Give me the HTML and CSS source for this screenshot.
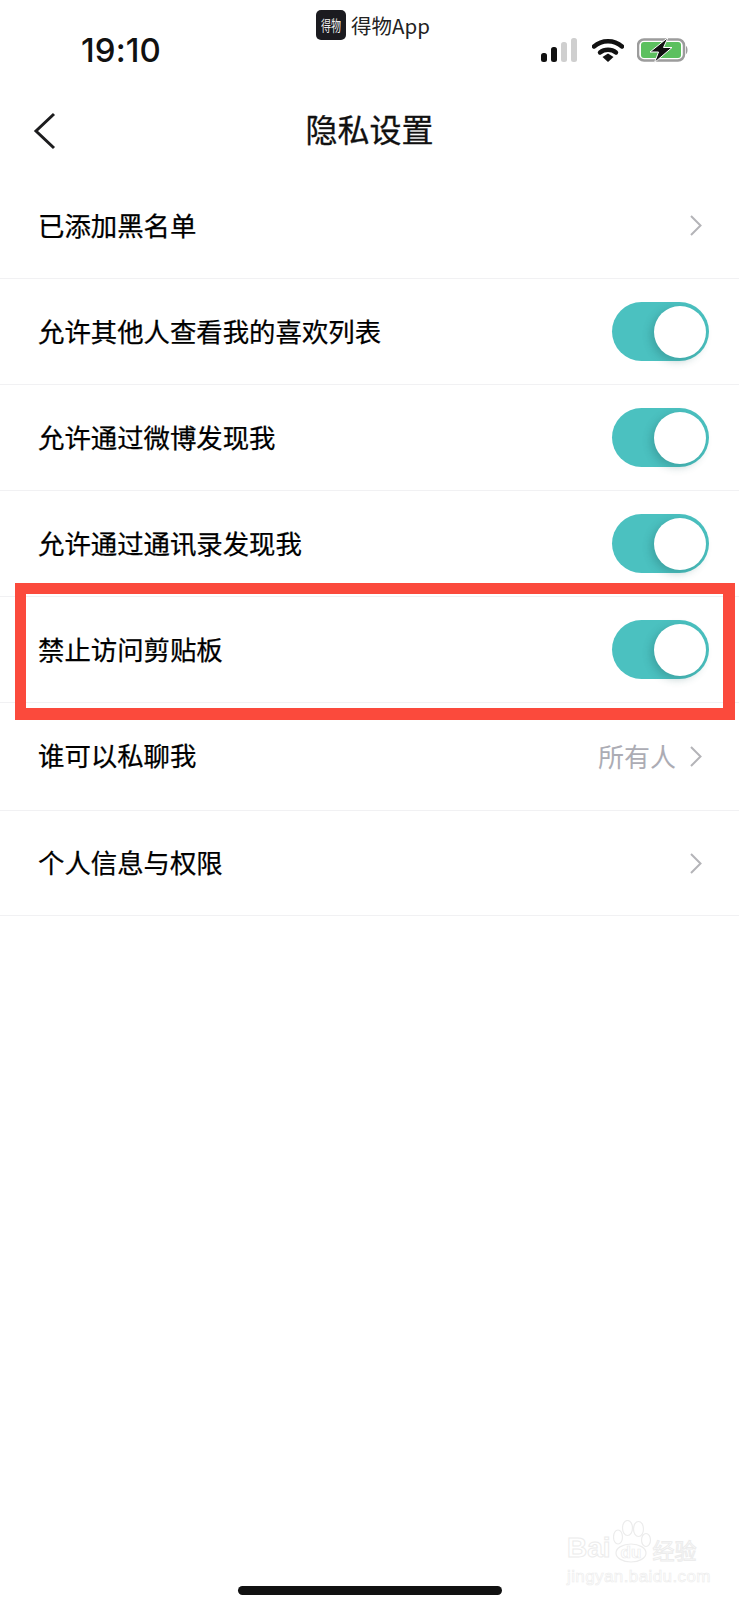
FILE: index.html
```html
<!DOCTYPE html>
<html lang="zh-CN">
<head>
  <meta charset="UTF-8" />
  <title>隐私设置</title>
  <link rel="stylesheet" href="styles.css">
</head>
<body>
  <div class="page">
    <div class="app-tag">
      <span class="app-logo"><span class="app-logo-text">得物</span></span>
      <span class="app-name">得物App</span>
    </div>

    <header class="status">
      <span class="time">19:10</span>
      <div class="status-icons">
        <svg class="signal" width="36" height="24" viewBox="0 0 36 24">
          <rect x="0" y="15" width="6" height="9" rx="2.5" fill="#111" />
          <rect x="10" y="9" width="6" height="15" rx="2.5" fill="#111" />
          <rect x="20" y="4" width="6" height="20" rx="2.5" fill="#cfcfcf" />
          <rect x="30" y="0" width="6" height="24" rx="2.5" fill="#cfcfcf" />
        </svg>
        <svg class="wifi" width="32" height="24" viewBox="0 0 32 24">
          <path d="M2 8.5 C10 1.5 22 1.5 30 8.5" fill="none" stroke="#111" stroke-width="4.4" stroke-linecap="round" />
          <path d="M8 14.5 C12.500 10.800 19.500 10.800 24 14.500" fill="none" stroke="#111" stroke-width="4.400" stroke-linecap="round" />
          <path d="M10.500 19 L16 15.500 L21.500 19 L16 24 Z" fill="#111" />
        </svg>
        <svg class="battery" width="52" height="26" viewBox="0 0 52 26">
          <rect x="1" y="2.500" width="46" height="21" rx="6" fill="#fff" stroke="#9c9c9c" stroke-width="2.500" />
          <rect x="4" y="5" width="40" height="16" rx="3" fill="#5cc05f" />
          <path d="M49 9 C51 10 51 16 49 17 Z" fill="#9c9c9c" />
          <path d="M31 0.500 L13 15 L21.500 15 L17.500 25.500 L35 10.500 L26.500 10.500 Z" fill="#111" stroke="#fff" stroke-width="1" stroke-linejoin="round" />
        </svg>
      </div>
    </header>

    <nav class="nav">
      <svg class="back" width="24" height="38" viewBox="0 0 24 38">
        <path d="M21 2 L3 19 L21 36" fill="none" stroke="#1c1c1e" stroke-width="3" />
      </svg>
      <h1 class="title">隐私设置</h1>
    </nav>

    <ul class="list">
      <li class="row">
        <span class="label">已添加黑名单</span>
        <svg class="arrow" width="12" height="21" viewBox="0 0 12 21"><path d="M1 1 L10.500 10.500 L1 20" /></svg>
      </li>
      <li class="row">
        <span class="label">允许其他人查看我的喜欢列表</span>
        <span class="switch"><span class="knob"></span></span>
      </li>
      <li class="row">
        <span class="label">允许通过微博发现我</span>
        <span class="switch"><span class="knob"></span></span>
      </li>
      <li class="row">
        <span class="label">允许通过通讯录发现我</span>
        <span class="switch"><span class="knob"></span></span>
      </li>
      <li class="row">
        <span class="label">禁止访问剪贴板</span>
        <span class="switch"><span class="knob"></span></span>
      </li>
      <li class="row row-tall">
        <span class="label">谁可以私聊我</span>
        <span class="value">所有人</span>
        <svg class="arrow" width="12" height="21" viewBox="0 0 12 21"><path d="M1 1 L10.500 10.500 L1 20" /></svg>
      </li>
      <li class="row row-short">
        <span class="label">个人信息与权限</span>
        <svg class="arrow" width="12" height="21" viewBox="0 0 12 21"><path d="M1 1 L10.500 10.500 L1 20" /></svg>
      </li>
    </ul>

    <div class="highlight"></div>

    <div class="watermark">
      <div class="wm-line">
        <span class="wm-bai">Bai</span>
        <span class="wm-paw">
          <svg class="paw" width="40" height="44" viewBox="0 0 40 44">
            <ellipse cx="5" cy="17" rx="4.500" ry="7" />
            <ellipse cx="14.500" cy="8" rx="5" ry="7.500" />
            <ellipse cx="25.500" cy="9" rx="5" ry="7.500" />
            <ellipse cx="33" cy="20" rx="4.500" ry="6.500" />
            <ellipse cx="18" cy="33" rx="15" ry="9" />
          </svg>
          <span class="wm-du">du</span>
        </span>
        <span class="wm-cn">经验</span>
      </div>
      <div class="wm-url">jingyan.baidu.com</div>
    </div>

    <div class="home-bar"></div>
  </div>
</body>
</html>
```

FILE: styles.css
```css
* {
  box-sizing: border-box;
}
html, body {
  margin: 0;
  padding: 0;
  background: #fff;
}
.page {
  position: relative;
  display: flex;
  flex-direction: column;
  width: 739px;
  height: 1600px;
  overflow: hidden;
  font-family: "Noto Sans CJK SC", "Noto Sans", sans-serif;
  color: #111;
}

/* app tag on top of the status bar */
.app-tag {
  position: absolute;
  top: 10px;
  left: 316px;
  display: flex;
  align-items: center;
  gap: 5px;
}
.app-logo {
  display: flex;
  align-items: center;
  justify-content: center;
  width: 30px;
  height: 30px;
  background: #1b1b20;
  border-radius: 5px;
  color: #eee;
  font-size: 10px;
  line-height: 12px;
}
.app-logo-text {
  display: block;
  transform: scaleY(1.5);
}
.app-name {
  font-size: 20.5px;
  line-height: 30px;
  color: #222;
}

/* status bar */
.status {
  display: flex;
  align-items: center;
  justify-content: space-between;
  height: 100px;
  padding: 0 50px 0 81px;
}
.time {
  font-family: Inter, Roboto, sans-serif;
  font-size: 33px;
  font-weight: 500;
  letter-spacing: 0.1px;
  color: #111;
}
.status-icons {
  display: flex;
  align-items: center;
  gap: 15px;
}
.battery {
  margin-left: -2px;
}

/* nav */
.nav {
  display: flex;
  align-items: center;
  justify-content: center;
  position: relative;
  height: 72px;
  margin-top: -5px;
}
.back {
  position: absolute;
  left: 33px;
  top: 17px;
}
.title {
  margin: 0;
  padding-bottom: 6px;
  font-size: 32px;
  font-weight: 400;
  line-height: 66px;
  color: #111;
  -webkit-text-stroke: 0.3px #111;
}

/* rows */
.list {
  list-style: none;
  margin: 6px 0 0;
  padding: 0;
}
.row {
  display: flex;
  align-items: center;
  height: 106px;
  padding: 0 30px 0 38px;
  border-bottom: 1px solid #f1f1f3;
}
.row-tall {
  height: 108px;
}
.row-short {
  height: 105px;
}
.label {
  flex: 1;
  margin-bottom: 2px;
  font-size: 26.4px;
  font-weight: 400;
  color: #000;
  -webkit-text-stroke: 0.25px #000;
}
.row-tall .label {
  margin-bottom: 4px;
}
.row-short .label {
  margin-bottom: 3px;
}
.value {
  margin-right: 14px;
  margin-bottom: 2px;
  font-size: 26px;
  color: #acacb4;
}
.arrow {
  margin-right: 7px;
}
.arrow path {
  fill: none;
  stroke: #b4b4b8;
  stroke-width: 2;
}
.switch {
  position: relative;
  display: block;
  width: 97px;
  height: 59px;
  border-radius: 30px;
  background: #4bc1c0;
}
.knob {
  position: absolute;
  top: 4px;
  right: 3px;
  width: 52px;
  height: 52px;
  border-radius: 50%;
  background: #fff;
  box-shadow: -3px 3px 8px rgba(30, 90, 90, 0.3);
}

/* red annotation box */
.highlight {
  position: absolute;
  left: 15px;
  top: 583px;
  width: 720px;
  height: 137px;
  border: solid #fb4a3c;
  border-width: 11px 12px 12px 11px;
}

/* baidu watermark */
.watermark {
  position: absolute;
  left: 567px;
  top: 1520px;
  width: 140px;
}
.wm-line {
  display: flex;
  align-items: flex-end;
  height: 44px;
  font-family: "Liberation Sans", sans-serif;
  font-weight: 700;
  color: #fff;
  -webkit-text-stroke: 1px #ececec;
}
.wm-bai {
  font-size: 28px;
  line-height: 32px;
}
.wm-paw {
  position: relative;
  display: block;
  width: 40px;
  height: 44px;
  margin-left: 2px;
}
.paw {
  display: block;
}
.paw ellipse {
  fill: #fff;
  stroke: #ececec;
  stroke-width: 1.2;
}
.wm-du {
  position: absolute;
  left: 8px;
  top: 23px;
  font-size: 17px;
  line-height: 20px;
  -webkit-text-stroke: 0.7px #ececec;
}
.wm-cn {
  font-family: "Noto Sans CJK SC", sans-serif;
  font-size: 22px;
  line-height: 30px;
  font-weight: 400;
}
.wm-url {
  margin-top: 3px;
  font-family: "Liberation Sans", sans-serif;
  font-size: 17px;
  line-height: 19px;
  letter-spacing: 0.4px;
  white-space: nowrap;
  color: #fff;
  -webkit-text-stroke: 0.6px #ececec;
}

/* home indicator */
.home-bar {
  width: 264px;
  height: 9px;
  margin: auto auto 5px;
  background: #111;
  border-radius: 5px;
}
```
